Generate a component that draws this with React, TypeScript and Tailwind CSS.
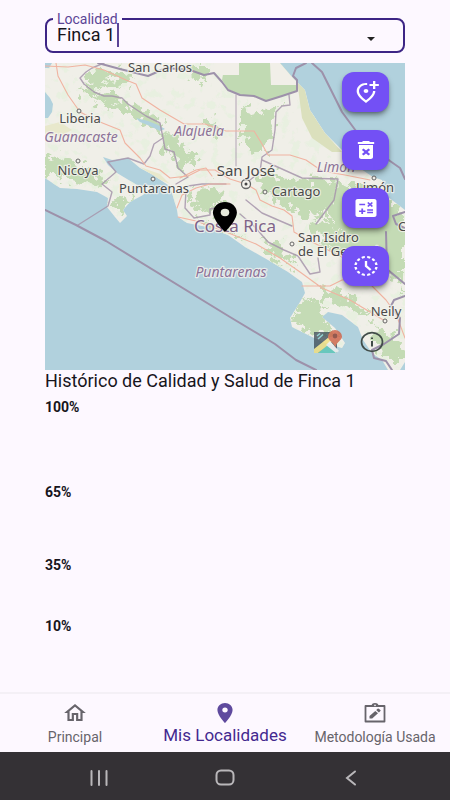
import React from "react";
import {
  MdCalculate,
  MdDeleteForever,
  MdHistoryToggleOff,
  MdLocationOn,
  MdOutlineAddLocationAlt,
  MdOutlineHome,
} from "react-icons/md";

const LAND =
  "M45 63H280L292 77L305 90L310 110L325 133L342 150L358 167L373 177L382 180L388 197L405 210V362L400 370H388L382 360L372 353L363 340L358 327L342 315L328 312L322 317L335 328L345 343L342 348L325 343L312 337L292 327L290 318L300 302L305 293L302 282L288 272L268 260L245 247L228 235L207 227L187 223L178 217L177 210L172 193L168 185L153 175L140 168L128 158L112 160L103 157L108 165L117 173L137 185L150 188L143 195L130 202L123 210L127 216L120 223L115 217L107 207L108 198L97 192L77 189L60 188L45 178Z";

const FORESTS = [
  "M84 75L96 69L120 70L134 78L124 84L108 82L100 90L90 86Z",
  "M80 84L100 92L122 99L128 108L140 106L155 116L166 128L162 136L148 128L140 120L122 113L106 108L96 98L84 94Z",
  "M45 160L62 156L74 164L96 172L108 182L100 187L80 182L60 178L45 172Z",
  "M164 130L178 138L188 150L200 156L190 164L180 170L174 158L162 148Z",
  "M240 108L256 114L268 108L280 104L274 118L268 140L260 158L250 148L240 136Z",
  "M190 192L206 188L226 190L222 204L208 212L192 206Z",
  "M262 172L300 178L336 180L334 200L322 214L306 220L292 208L270 202L260 186Z",
  "M322 216L350 240L398 262L400 276L380 274L346 258L322 242L312 226Z",
  "M338 182L372 186L388 200L405 214V290L392 276L366 252L340 230L326 214Z",
  "M298 304L314 298L328 308L322 318L334 332L318 336L294 322Z",
  "M374 324L386 330L402 346L405 360H388L376 344Z",
  "M196 220L222 222L244 240L226 232L204 226Z",
  "M260 236L280 244L296 266L286 264L270 254Z",
  "M112 198L126 196L134 200L120 212L114 206Z",
  "M320 286L346 294L368 312L360 314L338 302L320 298Z",
  "M188 66L200 66L208 74L202 82L192 76Z",
  "M202 122L212 118L220 130L212 136Z",
];

const ROADS = [
  "M56 63L58 76L68 95L80 112L100 122L120 130L125 143L140 158L146 166L160 170L170 178L188 176L200 170H215L230 179L246 184L256 190L260 200L272 206L284 210L292 216L294 232L308 240L332 252L352 262L372 286L386 300L396 314L405 338",
  "M45 66L68 67L85 65L104 70L126 80L136 84L142 98L160 110L184 124L205 124L226 131H254L262 144L268 155L290 155L306 160L322 171L345 175L370 180",
  "M177 208L182 195L196 188L210 184L230 184",
  "M178 217L196 221L226 232L256 244L280 258L300 272L322 288L350 300L370 312L385 321",
  "M180 178L196 170L206 168L212 176",
  "M302 286L330 286L342 280L372 278",
];

const BORDERS = [
  "M104 63L92 68L86 72L80 78L84 84L94 92L104 96L112 96L122 98L128 104L134 108L146 116L160 123L163 138L154 144L150 156L144 164L128 158L108 162",
  "M108 162L116 172L102 184L112 192L108 206L78 225",
  "M163 138L165 149L174 152L178 168L188 177L176 184",
  "M289 95L290 105L282 106L276 112L275 130L272 150L262 157L260 172L250 180",
  "M188 186L202 184L226 184M246 200L262 213L278 220L292 226M262 160L302 178L338 179L334 200L316 224",
  "M240 214L254 226L268 242L284 250L298 256L310 274L320 272L318 258",
  "M186 190L185 208L194 218L210 215V209L226 206",
];

const TOWNS: [number, number][] = [
  [79, 111],
  [78, 161],
  [153, 179],
  [265, 192],
  [292, 244],
  [374, 178],
  [385, 321],
];

function CostaRicaMap() {
  return (
    <svg
      viewBox="45 63 360 307"
      preserveAspectRatio="xMidYMid slice"
      className="block h-[307px] w-full bg-[#b1d1dd]"
      role="img"
      aria-label="Mapa de Costa Rica"
    >
      <defs>
        <clipPath id="land">
          <path d={LAND} />
        </clipPath>
        <filter id="ragged" x="-5%" y="-5%" width="110%" height="110%">
          <feTurbulence type="fractalNoise" baseFrequency="0.12" numOctaves="4" seed="4" />
          <feDisplacementMap in="SourceGraphic" scale="26" xChannelSelector="R" yChannelSelector="G" />
        </filter>
        <filter id="speckle" x="0" y="0" width="100%" height="100%">
          <feTurbulence type="fractalNoise" baseFrequency="0.1" numOctaves="4" seed="11" />
          <feColorMatrix values="0 0 0 0 0.79  0 0 0 0 0.87  0 0 0 0 0.73  9 0 0 0 -5.1" />
        </filter>
      </defs>

      <path d={LAND} fill="#f0efe8" />
      <g clipPath="url(#land)">
        <rect x="45" y="63" width="360" height="307" filter="url(#speckle)" opacity="0.8" />
        <g fill="#c4dbb5" filter="url(#ragged)">
          {FORESTS.map((d) => (
            <path key={d} d={d} />
          ))}
        </g>
        <path d="M225 63H284L297 80V91L282 96L266 101L254 96L240 95L228 89L222 80Z" fill="#c1dab3" />
        <path d="M216 63H239V75H222L214 70ZM270 63H280L297 80V85H271Z" fill="#f1efe8" />
        <path d="M297 80L305 90L310 110L325 133L342 152L332 152L312 138L302 118Z" fill="#dbe0bd" />
        <path d="M45 126L60 122L72 130L60 136L45 134ZM140 167L160 174L170 184L156 178Z" fill="#e8e8cc" />
      </g>
      <path d="M45 92L50 98L53 104L52 112L48 118H45ZM45 63H52L49 68H45Z" fill="#b1d1dd" />
      <path d="M136 118L148 121L158 125L165 129L160 131L150 126L140 122Z" fill="#b1d1dd" />

      <g fill="none" strokeLinejoin="round" strokeLinecap="round">
        <g stroke="#a796ac" strokeWidth="1.4" opacity="0.85">
          {BORDERS.map((d) => (
            <path key={d} d={d} />
          ))}
          <path d="M236 95V166" strokeWidth="1" />
        </g>
        <g stroke="#f0b3a1" strokeWidth="1.1">
          {ROADS.map((d) => (
            <path key={d} d={d} />
          ))}
        </g>
        <g stroke="#9d91aa" strokeWidth="2">
          <path d="M45 210L76 225L106 241L230 317L275 344L296 360L316 370" />
          <path d="M98 63L120 69L148 76L166 68L190 70L204 75L214 73L222 82L228 90L240 95L254 96L266 101L282 96L297 91V80L293 76L296 68L306 63M312 63L322 72L332 92L342 112L356 131L376 150L390 161L400 168L405 179" />
          <path d="M405 296L394 300L391 306L400 318L399 334L384 344L372 350L374 358L386 361L392 370M388 270L405 284M405 228L396 224L393 216L405 212M386 232L387 270" />
        </g>
      </g>

      <g fill="#f4f2ec" stroke="#666" strokeWidth="1">
        {TOWNS.map(([cx, cy]) => (
          <circle key={`${cx}-${cy}`} cx={cx} cy={cy} r="2" />
        ))}
        <circle cx="246" cy="184" r="4.5" strokeWidth="1.3" />
        <circle cx="246" cy="184" r="1.5" fill="#444" stroke="none" />
      </g>

      <g
        fontFamily="'Noto Sans', 'Open Sans', sans-serif"
        fontSize="13"
        fill="#4a4a4a"
        stroke="#f4f3ee"
        strokeOpacity="0.8"
        strokeWidth="2.4"
        strokeLinejoin="round"
        paintOrder="stroke"
        textAnchor="middle"
      >
        <text x="160" y="72">San Carlos</text>
        <text x="80" y="123">Liberia</text>
        <text x="78" y="175">Nicoya</text>
        <text x="154" y="193">Puntarenas</text>
        <text x="246" y="176" fontSize="15">San José</text>
        <text x="296" y="196">Cartago</text>
        <text x="375" y="192">Limón</text>
        <text x="298" y="242" textAnchor="start">San Isidro</text>
        <text x="298" y="256" textAnchor="start">de El General</text>
        <text x="386" y="316">Neily</text>
        <text x="398" y="231" textAnchor="start">C</text>
        <g fill="#8d7398" fontStyle="italic" fontSize="14">
          <text x="81" y="142">Guanacaste</text>
          <text x="199" y="136">Alajuela</text>
          <text x="336" y="172">Limón</text>
          <text x="231" y="277">Puntarenas</text>
        </g>
        <text x="235" y="232" fontSize="17" fill="#7f6488">
          Costa Rica
        </text>
      </g>

      <path
        d="M12 2C8.13 2 5 5.13 5 9c0 5.25 7 13 7 13s7-7.75 7-13c0-3.87-3.13-7-7-7z"
        transform="translate(204.4 199) scale(1.71 1.5)"
      />
      <ellipse cx="225" cy="212.500" rx="4.300" ry="3.700" fill="#e6eadc" />
    </svg>
  );
}

function MapsLogo() {
  return (
    <svg viewBox="0 0 28 25" className="h-[25px] w-7 opacity-80" aria-hidden="true">
      <path d="M0 3H23V24H0Z" fill="#3f4f5c" />
      <path d="M4 24L14 15L23 24Z" fill="#56c5b4" />
      <path d="M0 20L15 8L19 12L4 24H0Z" fill="#f2df7c" />
      <path d="M0 3H14V8L0 19Z" fill="#44525d" />
      <path d="M12 16L16 12L25 22L22 24Z" fill="#f1f1ee" />
      <path d="M3 7L6 4.500M4 10L9 5.500" stroke="#7fd0d2" strokeWidth="1.5" />
      <path d="M21 1a7 6.500 0 0 0-7 6.500c0 4 5 5 7.500 11C22 13 28 11.500 28 7.500A7 6.500 0 0 0 21 1z" fill="#cf6045" />
      <circle cx="21" cy="7" r="2.400" fill="#7d3529" />
    </svg>
  );
}

function InfoIcon() {
  return (
    <svg viewBox="0 0 24 22" className="h-[22px] w-6" fill="none" stroke="#414c48" aria-hidden="true">
      <ellipse cx="12" cy="11" rx="10.500" ry="9.300" strokeWidth="1.700" />
      <path d="M12 10V15.500M12 6.500V8" strokeWidth="2" />
    </svg>
  );
}

function ClipboardPencil() {
  return (
    <svg viewBox="0 0 24 22" className="h-[22px] w-6" aria-hidden="true">
      <path
        d="M2.500 4H21.500V19.500H2.500Z"
        fill="none"
        stroke="currentColor"
        strokeWidth="1.800"
        strokeLinejoin="round"
      />
      <path d="M8.500 4A3.500 3 0 0 1 15.500 4Z" fill="currentColor" />
      <circle cx="12" cy="3.400" r="0.800" fill="#fdf8ff" />
      <path d="M6.500 14V16.500H9.200L15 11.300L12.300 8.900ZM13.200 8.100L15.900 10.500L17.400 9.100a.7.700 0 0 0 0-1L15.700 6.700a.8.800 0 0 0-1.100 0Z" fill="currentColor" />
    </svg>
  );
}

const actions = [
  { label: "Agregar localidad", Icon: MdOutlineAddLocationAlt },
  { label: "Eliminar localidad", Icon: MdDeleteForever },
  { label: "Calcular", Icon: MdCalculate },
  { label: "Historial", Icon: MdHistoryToggleOff },
];

export default function App() {
  return (
    <div className="flex min-h-screen flex-col bg-[#fdf8ff] font-['Roboto',sans-serif] text-[#17151c]">
      <main className="flex-1 px-[45px] pt-[11px]">
        <fieldset className="h-[42px] rounded-lg border-2 border-[#3d2585] pr-6 pl-[6px]">
          <legend className="px-1 text-[14px] leading-4 text-[#5b4496]">
            <label htmlFor="localidad">Localidad</label>
          </legend>
          <div className="flex h-4 items-center pl-1">
            <input
              id="localidad"
              type="text"
              role="combobox"
              aria-expanded="false"
              aria-controls="localidades"
              defaultValue="Finca 1"
              className="field-sizing-content bg-transparent text-[18px] leading-5 outline-none"
            />
            <span className="ml-0.5 h-6 w-0.5 shrink-0 bg-[#5b4496]" />
            <button type="button" aria-label="Abrir lista" className="ml-auto flex h-6 w-4 items-center justify-center">
              <svg viewBox="0 0 8 4" className="mt-2 h-1 w-2" aria-hidden="true">
                <path d="M0 0H8L4 4Z" fill="#222" />
              </svg>
            </button>
          </div>
        </fieldset>

        <section className="relative mt-[10px]">
          <CostaRicaMap />
          <div className="absolute top-[9px] right-4 flex flex-col gap-[18px]">
            {actions.map(({ label, Icon }) => (
              <button
                key={label}
                type="button"
                aria-label={label}
                className="flex h-10 w-[47px] items-center justify-center rounded-xl bg-[#7350f5] text-white shadow-md shadow-black/40"
              >
                <Icon className="h-6 w-7" preserveAspectRatio="none" />
              </button>
            ))}
          </div>
          <div className="absolute right-[21px] bottom-4 flex items-center gap-[18px]">
            <button type="button" aria-label="Abrir en mapas">
              <MapsLogo />
            </button>
            <button type="button" aria-label="Información">
              <InfoIcon />
            </button>
          </div>
        </section>

        <h1 className="text-[18px] leading-[22px]">Histórico de Calidad y Salud de Finca 1</h1>
        <ul className="mt-[7px] text-[14px] leading-4 font-bold">
          <li className="h-[85px]">100%</li>
          <li className="h-[73px]">65%</li>
          <li className="h-[61px]">35%</li>
          <li>10%</li>
        </ul>
      </main>

      <nav className="grid h-[60px] grid-cols-3 border-t-2 border-[#f4f0f6] text-[14px] text-[#67646b]">
        <a href="#principal" className="flex flex-col items-center pt-[7px]">
          <MdOutlineHome className="h-6 w-[26px]" preserveAspectRatio="none" />
          <span className="leading-6">Principal</span>
        </a>
        <a href="#localidades" aria-current="page" className="flex flex-col items-center pt-[7px] text-[17px] text-[#43298f]">
          <MdLocationOn className="h-6 w-[26px] text-[#5f4a9e]" preserveAspectRatio="none" />
          <span className="leading-5 whitespace-nowrap">Mis Localidades</span>
        </a>
        <a href="#metodologia" className="flex flex-col items-center pt-[7px]">
          <span className="flex h-6 items-center">
            <ClipboardPencil />
          </span>
          <span className="leading-6 whitespace-nowrap">Metodología Usada</span>
        </a>
      </nav>

      <footer className="grid h-12 grid-cols-3 place-items-center bg-[#343135] px-9 pt-[3px] text-[#b9b7ba]">
        <button type="button" aria-label="Recientes">
          <svg viewBox="0 0 18 16" className="h-4 w-[18px]" aria-hidden="true">
            <path d="M1.500 1V15M9 1V15M16.500 1V15" stroke="currentColor" strokeWidth="2" strokeLinecap="round" />
          </svg>
        </button>
        <button type="button" aria-label="Inicio">
          <svg viewBox="0 0 20 17" className="h-[17px] w-5" aria-hidden="true">
            <rect x="1.500" y="1.500" width="17" height="14" rx="4.500" fill="none" stroke="currentColor" strokeWidth="2" />
          </svg>
        </button>
        <button type="button" aria-label="Atrás">
          <svg viewBox="0 0 12 16" className="h-4 w-3" aria-hidden="true">
            <path d="M10 1.500L2 8L10 14.500" fill="none" stroke="currentColor" strokeWidth="2" strokeLinecap="round" />
          </svg>
        </button>
      </footer>
    </div>
  );
}
